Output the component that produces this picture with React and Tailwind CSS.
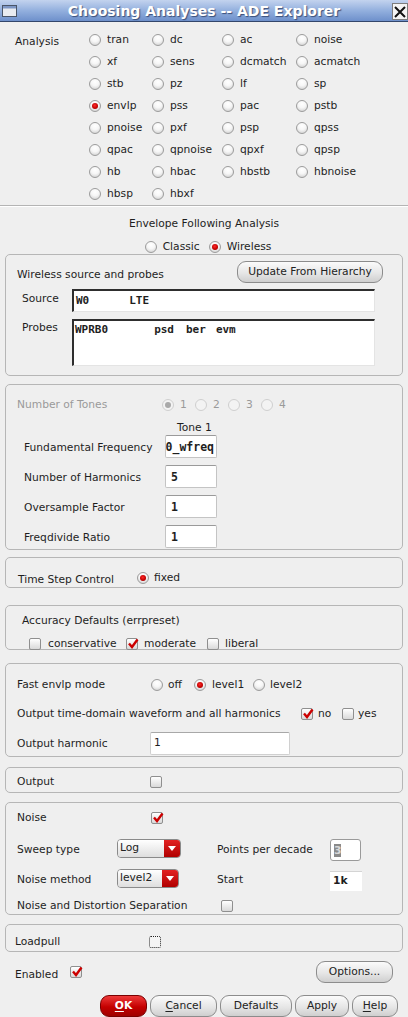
import React from "react";

function Radio({ checked, disabled, className = "" }) {
  return (
    <span
      className={`inline-flex items-center justify-center shrink-0 w-[12px] h-[12px] rounded-full border ${
        disabled
          ? "border-[#cfcfcf] bg-[#f3f3f3]"
          : "border-[#9c9c9c] bg-[radial-gradient(circle_at_50%_30%,#ffffff_0%,#f6f6f6_45%,#c9c9c9_100%)]"
      } ${className}`}
    >
      {checked && (
        <span
          className={`w-[6px] h-[6px] rounded-full ${
            disabled ? "bg-[#a9a9a9]" : "bg-[radial-gradient(circle_at_45%_40%,#ff2a2a_0%,#c00000_60%,#800000_100%)]"
          }`}
        />
      )}
    </span>
  );
}

function Check({ checked, dotted }) {
  return (
    <span
      className={`relative inline-flex shrink-0 w-[12px] h-[12px] rounded-[2px] ${
        dotted
          ? "border border-dotted border-[#222] bg-[#f4f4f4]"
          : "border border-[#8f8f8f] bg-[linear-gradient(#ffffff,#d9d9d9)]"
      }`}
    >
      {checked && (
        <svg viewBox="0 0 12 12" className="absolute left-[0px] top-[-1px] w-[12px] h-[12px]">
          <path d="M2 5.5 L5 9 L10.5 1.5" stroke="#cc0000" strokeWidth="2.4" fill="none" strokeLinejoin="miter" />
        </svg>
      )}
    </span>
  );
}

function Pill({ children, className = "" }) {
  return (
    <div
      className={`flex items-center justify-center rounded-[9px] border border-[#8c8c8c] bg-[linear-gradient(#fbfbfb,#e6e6e6_55%,#cfcfcf)] text-[#222] ${className}`}
    >
      {children}
    </div>
  );
}

function Dropdown({ label, w }) {
  return (
    <div className={`flex h-[19px] ${w} rounded-[4px] border border-[#8a8a8a] overflow-hidden`}>
      <div className="flex-1 flex items-center pl-[2px] bg-[linear-gradient(#ffffff,#dedede)] text-[#222]">{label}</div>
      <div className="w-[16px] flex items-center justify-center bg-[linear-gradient(#e22222,#b00000)]">
        <svg viewBox="0 0 8 5" className="w-[8px] h-[5px]">
          <path d="M0 0 L8 0 L4 5 Z" fill="#ffffff" />
        </svg>
      </div>
    </div>
  );
}

const sunken =
  "bg-white border-t-[2px] border-l-[2px] border-r border-b border-t-[#2e2e2e] border-l-[#2e2e2e] border-r-[#e4e4e4] border-b-[#e4e4e4]";
const lightInput =
  "bg-white border border-[#c4c4c4] border-t-[#9a9a9a] rounded-[2px]";

const Group = ({ className = "", children }) => (
  <div className={`mx-[5px] box-border rounded-[5px] border border-[#b6b6b6] flex flex-col ${className}`}>{children}</div>
);

export default function App() {
  const analyses = [
    ["tran", "dc", "ac", "noise"],
    ["xf", "sens", "dcmatch", "acmatch"],
    ["stb", "pz", "lf", "sp"],
    ["envlp", "pss", "pac", "pstb"],
    ["pnoise", "pxf", "psp", "qpss"],
    ["qpac", "qpnoise", "qpxf", "qpsp"],
    ["hb", "hbac", "hbstb", "hbnoise"],
    ["hbsp", "hbxf", null, null],
  ];
  const colW = ["w-[63px]", "w-[70px]", "w-[74px]", "w-[80px]"];

  return (
    <div className="w-[408px] h-[1017px] overflow-hidden bg-[#efefef] text-[#1e1e1e] font-['DejaVu_Sans',sans-serif] text-[10.7px] leading-[16px] flex flex-col">
      {/* Title bar */}
      <div className="relative h-[22px] shrink-0 flex items-center justify-center bg-[linear-gradient(#c3d3ee,#93b0de_50%,#6e90cb)] border-b border-[#33466b]">
        <svg viewBox="0 0 15 12" className="absolute left-[2px] top-[5px] w-[15px] h-[12px]">
          <rect x="0.5" y="0.5" width="14" height="11" fill="#e8ebf0" stroke="#4a5568" />
          <rect x="1" y="1" width="13" height="2.5" fill="#7d96c4" />
        </svg>
        <span className="text-white font-bold text-[14px] leading-[18px] [text-shadow:1px_1px_1px_#3a4f7a]">
          Choosing Analyses -- ADE Explorer
        </span>
        <div className="absolute right-0 top-[3px] w-[16px] h-[17px] bg-[#f4f4f4] border border-[#7d7d7d] flex items-center justify-center">
          <svg viewBox="0 0 12 12" className="w-[12px] h-[12px]">
            <path d="M1 1 L11 11 M11 1 L1 11" stroke="#111" strokeWidth="2" />
          </svg>
        </div>
      </div>

      {/* Analysis */}
      <div className="flex pt-[7px]">
        <div className="w-[89px] pl-[15px] pt-[5px] leading-[16px]">Analysis</div>
        <div className="flex flex-col">
          {analyses.map((row, ri) => (
            <div key={ri} className="flex h-[22px] items-center">
              {row.map((a, ci) => (
                <div key={ci} className={`${colW[ci]} flex items-center`}>
                  {a && (
                    <>
                      <Radio checked={a === "envlp"} />
                      <span className="ml-[6px]">{a}</span>
                    </>
                  )}
                </div>
              ))}
            </div>
          ))}
        </div>
      </div>
      <div className="h-px bg-[#b4b4b4] border-b border-white box-content" />

      {/* Envelope header */}
      <div className="mt-[8px] h-[18px] flex items-center justify-center">Envelope Following Analysis</div>
      <div className="mt-[8px] h-[13px] flex items-center justify-center pl-[8px]">
        <Radio />
        <span className="ml-[6px]">Classic</span>
        <Radio checked className="ml-[9px]" />
        <span className="ml-[6px]">Wireless</span>
      </div>

      {/* Group 1: Wireless */}
      <Group className="h-[123px]">
        <div className="pt-[6px] flex items-center h-[28px] pl-[11px] pr-[19px]">
          <span className="mt-[6px]">Wireless source and probes</span>
          <Pill className="ml-auto w-[146px] h-[22px]">Update From Hierarchy</Pill>
        </div>
        <div className="mt-[6px] flex items-center">
          <div className="w-[66px] pl-[16px] mt-[-2px]">Source</div>
          <div className={`w-[303px] h-[23px] ${sunken} flex items-center pl-[2px] font-['DejaVu_Sans_Mono',monospace] font-bold text-[11px] whitespace-pre`}>
            <span>W0</span>
            <span className="ml-[40px]">LTE</span>
          </div>
        </div>
        <div className="mt-[7px] flex items-start">
          <div className="w-[66px] pl-[16px] pt-[1px]">Probes</div>
          <div className={`w-[303px] h-[47px] ${sunken} pl-[1px] pt-[1px] font-['DejaVu_Sans_Mono',monospace] font-bold text-[11px] whitespace-pre flex`}>
            <span>WPRB0</span>
            <span className="ml-[46px]">psd</span>
            <span className="ml-[12px]">ber</span>
            <span className="ml-[10px]">evm</span>
          </div>
        </div>
      </Group>

      {/* Group 2: Tones */}
      <Group className="mt-[8px] h-[167px]">
        <div className="pt-[12px] h-[27px] flex items-center">
          <div className="w-[156px] pl-[11px] text-[#9a9a9a]">Number of Tones</div>
          {["1", "2", "3", "4"].map((t) => (
            <div key={t} className="w-[33px] flex items-center text-[#9a9a9a]">
              <Radio disabled checked={t === "1"} />
              <span className="ml-[6px]">{t}</span>
            </div>
          ))}
        </div>
        <div className="mt-[9px] h-[14px] leading-[14px] pl-[171px]">Tone 1</div>
        {[
          ["Fundamental Frequency", "W0_wfreq", true],
          ["Number of Harmonics", "5"],
          ["Oversample Factor", "1"],
          ["Freqdivide Ratio", "1"],
        ].map(([l, v, right], i) => (
          <div key={l} className={`flex items-center h-[23px] ${i === 0 ? "mt-[0px]" : "mt-[7px]"}`}>
            <div className="w-[159px] pl-[18px] mt-[2px]">{l}</div>
            <div
              className={`w-[52px] h-[23px] ${lightInput} flex items-center overflow-hidden whitespace-nowrap font-['DejaVu_Sans_Mono',monospace] font-bold text-[11.5px] ${
                right ? "justify-end pr-[2px]" : "pl-[5px]"
              }`}
            >
              {v}
            </div>
          </div>
        ))}
      </Group>

      {/* Group 3: Time step */}
      <Group className="mt-[7px] h-[31px]">
        <div className="pt-[12px] flex items-center h-[28px]">
          <div className="w-[131px] pl-[12px] mt-[3px]">Time Step Control</div>
          <Radio checked />
          <span className="ml-[5px]">fixed</span>
        </div>
      </Group>

      {/* Group 4: Accuracy */}
      <Group className="mt-[17px] h-[45px]">
        <div className="pt-[7px] h-[23px] pl-[16px] flex items-center">Accuracy Defaults (errpreset)</div>
        <div className="mt-[7px] h-[16px] pl-[23px] flex items-center">
          <div className="w-[97px] flex items-center">
            <Check />
            <span className="ml-[7px]">conservative</span>
          </div>
          <div className="w-[81px] flex items-center">
            <Check checked />
            <span className="ml-[6px]">moderate</span>
          </div>
          <div className="flex items-center">
            <Check />
            <span className="ml-[6px]">liberal</span>
          </div>
        </div>
      </Group>

      {/* Group 5: Fast envlp */}
      <Group className="mt-[13px] h-[95px]">
        <div className="pt-[13px] h-[29px] flex items-center">
          <div className="w-[145px] pl-[11px]">Fast envlp mode</div>
          <div className="w-[43px] flex items-center">
            <Radio />
            <span className="ml-[5px]">off</span>
          </div>
          <div className="w-[59px] flex items-center">
            <Radio checked />
            <span className="ml-[6px]">level1</span>
          </div>
          <div className="flex items-center">
            <Radio />
            <span className="ml-[5px]">level2</span>
          </div>
        </div>
        <div className="mt-[13px] h-[16px] flex items-center">
          <div className="w-[295px] pl-[11px] whitespace-nowrap">Output time-domain waveform and all harmonics</div>
          <div className="w-[41px] flex items-center">
            <Check checked />
            <span className="ml-[5px]">no</span>
          </div>
          <div className="flex items-center">
            <Check />
            <span className="ml-[4px]">yes</span>
          </div>
        </div>
        <div className="mt-[10px] h-[23px] flex items-center">
          <div className="w-[144px] pl-[11px] mt-[1px]">Output harmonic</div>
          <div className="w-[140px] h-[23px] bg-white border border-[#d0d0d0] border-t-[#a8a8a8] rounded-[2px] flex items-center pl-[3px]">1</div>
        </div>
      </Group>

      {/* Group 6: Output */}
      <Group className="mt-[10px] h-[26px]">
        <div className="pt-[6px] h-[22px] flex items-center">
          <div className="w-[144px] pl-[11px]">Output</div>
          <Check />
        </div>
      </Group>

      {/* Group 7: Noise */}
      <Group className="mt-[9px] h-[113px]">
        <div className="pt-[7px] h-[23px] flex items-center">
          <div className="w-[145px] pl-[11px]">Noise</div>
          <Check checked />
        </div>
        <div className="mt-[10px] h-[24px] flex items-center">
          <div className="w-[111px] pl-[11px] mt-[3px]">Sweep type</div>
          <Dropdown label="Log" w="w-[64px]" />
          <div className="ml-[36px] w-[113px] mt-[3px]">Points per decade</div>
          <div className="w-[31px] h-[22px] mt-[4px] bg-white border border-[#9a9a9a] rounded-[3px] flex items-center pl-[3px] font-bold">
            <span className="bg-[#8a8a8a] text-[#d8d8d8] leading-[13px]">3</span>
          </div>
        </div>
        <div className="mt-[6px] h-[24px] flex items-center">
          <div className="w-[111px] pl-[11px] mt-[3px]">Noise method</div>
          <Dropdown label="level2" w="w-[62px]" />
          <div className="ml-[38px] w-[113px] mt-[3px]">Start</div>
          <div className="w-[32px] h-[20px] mt-[5px] bg-white border-t border-t-[#d4d4d4] flex items-center pl-[3px] font-bold">1k</div>
        </div>
        <div className="mt-[8px] h-[16px] flex items-center">
          <div className="w-[215px] pl-[11px] whitespace-nowrap">Noise and Distortion Separation</div>
          <Check />
        </div>
      </Group>

      {/* Group 8: Loadpull */}
      <Group className="mt-[9px] h-[28px]">
        <div className="pt-[9px] h-[25px] flex items-center">
          <div className="w-[143px] pl-[9px]">Loadpull</div>
          <Check dotted />
        </div>
      </Group>

      {/* Enabled / Options */}
      <div className="mt-[9px] h-[22px] flex items-center pl-[15px] pr-[15px]">
        <div className="w-[55px] mt-[5px]">Enabled</div>
        <Check checked />
        <Pill className="ml-auto w-[77px] h-[22px]">Options...</Pill>
      </div>

      {/* Bottom buttons */}
      <div className="mt-[12px] h-[22px] shrink-0 flex items-start pl-[100px] gap-[3px]">
        <div className="w-[47px] h-[22px] rounded-[9px] border border-[#7a0000] bg-[linear-gradient(#ee3a3a,#c40000_55%,#a00000)] flex items-center justify-center text-white font-bold">
          <span className="underline underline-offset-2">O</span>K
        </div>
        <Pill className="w-[67px] h-[22px]">
          <span className="underline underline-offset-2">C</span>ancel
        </Pill>
        <Pill className="w-[72px] h-[22px]">Defaults</Pill>
        <Pill className="w-[54px] h-[22px]">Apply</Pill>
        <Pill className="w-[46px] h-[22px]">
          <span className="underline underline-offset-2">H</span>elp
        </Pill>
      </div>
    </div>
  );
}
